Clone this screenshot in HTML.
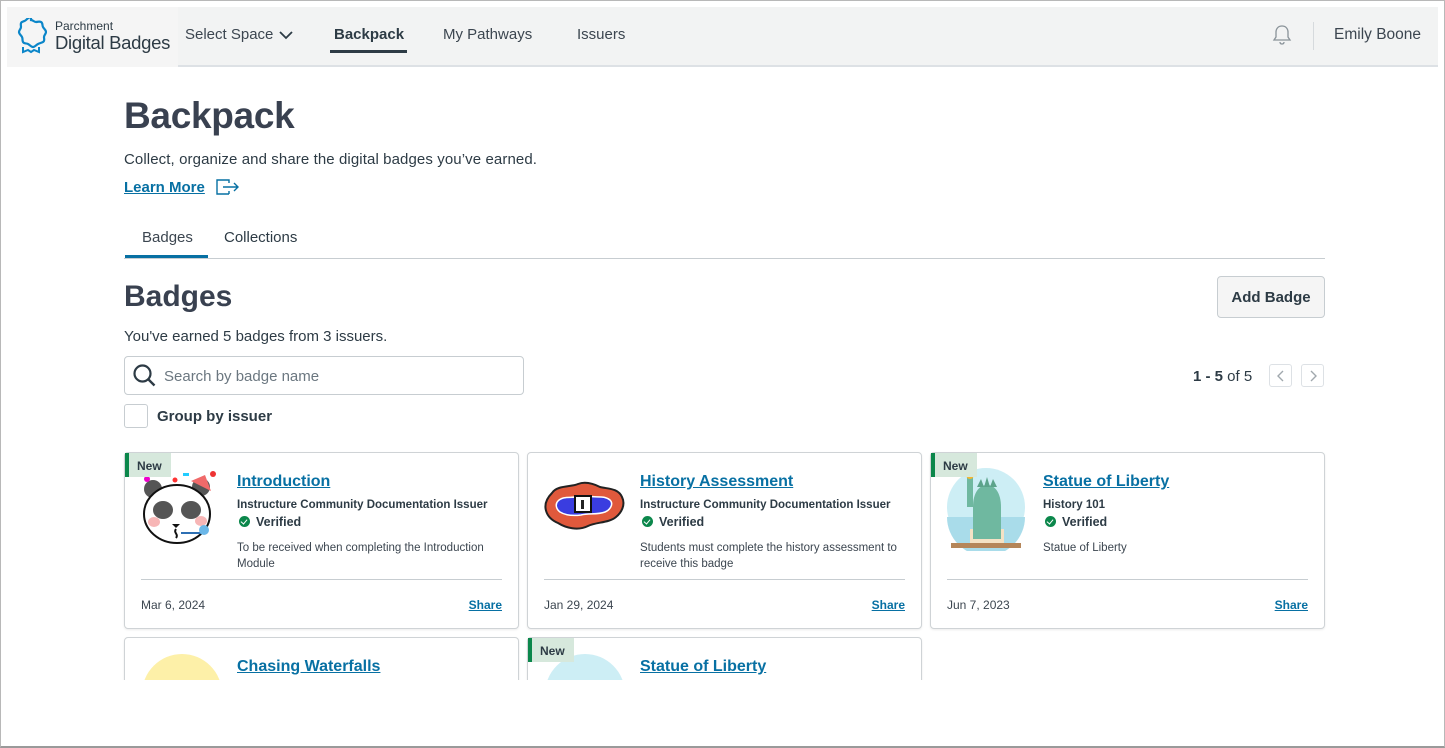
<!DOCTYPE html>
<html><head><meta charset="utf-8"><style>
*{box-sizing:border-box;margin:0;padding:0}
html,body{width:1445px;height:748px;overflow:hidden}
body{position:relative;background:#fff;font-family:"Liberation Sans",sans-serif;color:#2d3b45}
.frame{position:absolute;left:0;top:0;width:1445px;height:748px;border:1px solid #b8b8b8;border-bottom:2px solid #9a9a9a}
.app{position:absolute;left:7px;top:7px;width:1431px;height:673px;overflow:hidden;background:#fff}
.a{position:absolute;white-space:nowrap}
.hdr{position:absolute;left:0;top:0;width:1431px;height:60px;background:#f2f3f3;border-bottom:2px solid #dde1e5}
.lnk{color:#0770a3;text-decoration:underline}
.card{position:absolute;width:395px;height:177px;border:1px solid #cfd3d6;border-radius:4px;background:#fff;box-shadow:0 1px 2px rgba(0,0,0,.08)}
.new{position:absolute;left:0;top:0;width:46px;height:24px;background:#d6e8dc;border-left:4px solid #0b874b;font-size:12px;font-weight:bold;color:#2d3b45;padding:6px 0 0 8px}
.ct{position:absolute;left:112px;top:20px;font-size:16px;font-weight:bold;color:#0770a3;text-decoration:underline}
.is{position:absolute;left:112px;top:46px;font-size:11.5px;font-weight:bold}
.vf{position:absolute;left:114px;top:62px;font-size:12.5px;font-weight:bold}
.vf i{display:inline-block;width:11px;height:11px;border-radius:50%;background:#0b874b;margin-right:6px;vertical-align:-1px;position:relative}
.vf i:after{content:"";position:absolute;left:3px;top:2px;width:3px;height:5px;border:solid #fff;border-width:0 1.5px 1.5px 0;transform:rotate(40deg)}
.ds{position:absolute;left:112px;top:87px;font-size:11.5px;line-height:16px;color:#3c4650;white-space:normal;width:275px}
.dv{position:absolute;left:16px;right:16px;top:126px;border-top:1px solid #c7cdd1}
.dt{position:absolute;left:16px;top:145px;font-size:12px;color:#3c4650}
.sh{position:absolute;right:16px;top:145px;font-size:12px;font-weight:bold;color:#0770a3;text-decoration:underline}
</style></head><body>
<div class="frame"></div>
<div class="app">
 <div class="hdr">
  <div style="position:absolute;left:0;top:0;width:171px;height:60px;background:#f5f5f5"></div>
  <svg class="a" style="left:8px;top:11px" width="32" height="36" viewBox="0 0 32 36"><path d="M16 2c2 0 3 2 5 2s3-1 5 0 1 3 2 5 3 3 3 5-2 3-2 5 1 4-1 5-3 1-5 2-3 3-5 3-3-2-5-3-4 0-5-2 0-3-1-5-3-3-3-5 2-3 2-5-1-4 1-5 3-1 4-2 3-3 5-3z" fill="none" stroke="#0b86c9" stroke-width="2.2"/><path d="M8 29v5l5-2 3 2 3-2 5 2v-5" fill="none" stroke="#0b86c9" stroke-width="2"/></svg>
  <div class="a" style="left:48px;top:12px;font-size:12px;color:#2d3b45">Parchment</div>
  <div class="a" style="left:48px;top:25px;font-size:18.5px;color:#2d3b45;letter-spacing:-.3px">Digital Badges</div>
  <div class="a" style="left:178px;top:19px;font-size:15px;color:#3c4650">Select Space</div>
  <svg class="a" style="left:272px;top:23px" width="14" height="10" viewBox="0 0 14 10"><path d="M1 2l6 6 6-6" fill="none" stroke="#2d3b45" stroke-width="1.8"/></svg>
  <div class="a" style="left:327px;top:19px;font-size:15px;font-weight:bold">Backpack</div>
  <div class="a" style="left:323px;top:43px;width:77px;height:3px;background:#2d3b45"></div>
  <div class="a" style="left:436px;top:19px;font-size:15px;color:#3c4650">My Pathways</div>
  <div class="a" style="left:570px;top:19px;font-size:15px;color:#3c4650">Issuers</div>
  <svg class="a" style="left:1265px;top:17px" width="20" height="22" viewBox="0 0 20 22"><path d="M10 2c-4 0-6 3-6 6v5l-2 3h16l-2-3V8c0-3-2-6-6-6zM8 18c0 1.5 1 2 2 2s2-.5 2-2" fill="none" stroke="#8a9399" stroke-width="1.3"/></svg>
  <div class="a" style="left:1306px;top:15px;width:1px;height:28px;background:#d6dadd"></div>
  <div class="a" style="left:1327px;top:19px;font-size:15.5px;color:#3c4650">Emily Boone</div>
 </div>
 <div class="a" style="left:117px;top:88px;font-size:37px;font-weight:bold;color:#394150;letter-spacing:-.3px">Backpack</div>
 <div class="a" style="left:117px;top:144px;font-size:15px;color:#2d3b45;letter-spacing:.1px">Collect, organize and share the digital badges you’ve earned.</div>
 <div class="a lnk" style="left:117px;top:172px;font-size:15px;font-weight:bold">Learn More</div>
 <svg class="a" style="left:208px;top:171px" width="26" height="18" viewBox="0 0 26 18"><path d="M14 2H2v14h12M2 2h12v3M14 13v3M8 9h15M19 5l4 4-4 4" fill="none" stroke="#0770a3" stroke-width="1.4"/></svg>
 <div class="a" style="left:135px;top:222px;font-size:15px;color:#3c4650">Badges</div>
 <div class="a" style="left:217px;top:222px;font-size:15px;color:#2d3b45">Collections</div>
 <div class="a" style="left:117px;top:251px;width:1201px;height:1px;background:#c7cdd1"></div>
 <div class="a" style="left:118px;top:248px;width:83px;height:3px;background:#0770a3"></div>
 <div class="a" style="left:117px;top:273px;font-size:30px;font-weight:bold;color:#394150">Badges</div>
 <div class="a" style="left:1210px;top:269px;width:108px;height:42px;background:#f5f5f5;border:1px solid #c7cdd1;border-radius:4px;font-size:15px;font-weight:bold;text-align:center;line-height:41px">Add Badge</div>
 <div class="a" style="left:117px;top:321px;font-size:15px">You've earned 5 badges from 3 issuers.</div>
 <div class="a" style="left:117px;top:349px;width:400px;height:39px;border:1px solid #c7cdd1;border-radius:4px"></div>
 <svg class="a" style="left:125px;top:356px" width="26" height="26" viewBox="0 0 26 26"><circle cx="10.5" cy="10.5" r="8" fill="none" stroke="#2d3b45" stroke-width="2.2"/><path d="M16.5 16.5l6 6" stroke="#2d3b45" stroke-width="2.4"/></svg>
 <div class="a" style="left:157px;top:361px;font-size:15px;color:#6b7780">Search by badge name</div>
 <div class="a" style="left:117px;top:397px;width:24px;height:24px;border:1px solid #c7cdd1;border-radius:3px"></div>
 <div class="a" style="left:150px;top:401px;font-size:15px;font-weight:bold">Group by issuer</div>
 <div class="a" style="left:1186px;top:361px;font-size:15px"><b>1 - 5</b> of 5</div>
 <div class="a" style="left:1262px;top:357px;width:23px;height:23px;border:1px solid #dde1e5;border-radius:3px"></div>
 <svg class="a" style="left:1268px;top:362px" width="12" height="14"><path d="M8 2L3 7l5 5" fill="none" stroke="#a0a8ad" stroke-width="1.4"/></svg>
 <div class="a" style="left:1294px;top:357px;width:23px;height:23px;border:1px solid #dde1e5;border-radius:3px"></div>
 <svg class="a" style="left:1300px;top:362px" width="12" height="14"><path d="M4 2l5 5-5 5" fill="none" stroke="#a0a8ad" stroke-width="1.4"/></svg>

 <div class="card" style="left:117px;top:445px">
  <svg class="a" style="left:14px;top:14px" width="82" height="82" viewBox="0 0 82 82"><circle cx="14" cy="22" r="9" fill="#555"/><circle cx="62" cy="20" r="9" fill="#555"/><ellipse cx="38" cy="47" rx="33" ry="29" fill="#fff" stroke="#111" stroke-width="2"/><ellipse cx="24" cy="43" rx="10" ry="9" fill="#555"/><ellipse cx="52" cy="43" rx="10" ry="9" fill="#555"/><ellipse cx="15" cy="55" rx="6" ry="5" fill="#f7b6b6"/><ellipse cx="62" cy="54" rx="6" ry="5" fill="#f7b6b6"/><path d="M33 57h8l-4 4z" fill="#111"/><path d="M37 62c-3 4 3 5 0 9" fill="none" stroke="#111" stroke-width="2"/><path d="M42 66h20" stroke="#2d6fb3" stroke-width="2"/><circle cx="65" cy="63" r="5" fill="#6bb7e8"/><path d="M52 14l14-6 6 16z" fill="#f06a6a"/><circle cx="74" cy="7" r="3" fill="#e33"/><circle cx="8" cy="12" r="3" fill="#e0c"/><circle cx="36" cy="13" r="2.5" fill="#f33"/><rect x="44" y="6" width="6" height="3" fill="#2cf"/></svg>
  <div class="new">New</div>
  <div class="ct">Introduction</div>
  <div class="is">Instructure Community Documentation Issuer</div>
  <div class="vf"><i></i>Verified</div>
  <div class="ds">To be received when completing the Introduction Module</div>
  <div class="dv"></div><div class="dt">Mar 6, 2024</div><div class="sh">Share</div>
 </div>
 <div class="card" style="left:520px;top:445px">
  <svg class="a" style="left:14px;top:26px" width="84" height="56" viewBox="0 0 84 56"><path d="M10 14c5-8 20-6 26-9 8-3 16 0 22 3 8 2 18 1 22 10 4 8-1 16-6 20-7 6-20 5-28 9-10 5-22 2-30-3C4 39-2 26 10 14z" fill="#e0593c" stroke="#222" stroke-width="2"/><path d="M16 22c6-6 14-2 22-5h8c8 2 16-1 22 4 4 4 0 10-5 12-8 3-16 1-24 3-8 1-16 0-21-3-4-3-5-8-2-11z" fill="#3a3de0" stroke="#fff" stroke-width="1.5"/><rect x="33" y="17" width="16" height="16" fill="#fff" stroke="#111" stroke-width="2"/><rect x="39" y="21" width="3" height="9" fill="#222"/></svg>
  <div class="ct">History Assessment</div>
  <div class="is">Instructure Community Documentation Issuer</div>
  <div class="vf"><i></i>Verified</div>
  <div class="ds">Students must complete the history assessment to receive this badge</div>
  <div class="dv"></div><div class="dt">Jan 29, 2024</div><div class="sh">Share</div>
 </div>
 <div class="card" style="left:923px;top:445px">
  <svg class="a" style="left:14px;top:14px" width="82" height="84" viewBox="0 0 82 84"><circle cx="41" cy="40" r="39" fill="#cdeef5"/><path d="M2 50h78a39 39 0 0 1-78 0z" fill="#a9dcea"/><path d="M25 62h34v16H25z" fill="#f4e2c5"/><path d="M22 10h6v30h-6z" fill="#6fb8a0"/><circle cx="25" cy="8" r="4" fill="#f5b630"/><path d="M28 40c0-14 6-22 14-22s14 8 14 22v32H28z" fill="#6fb8a0"/><path d="M32 20l4-8 3 8 3-10 3 10 3-8 4 8z" fill="#5ca38b"/><rect x="6" y="76" width="70" height="5" fill="#b5865a"/></svg>
  <div class="new">New</div>
  <div class="ct">Statue of Liberty</div>
  <div class="is">History 101</div>
  <div class="vf"><i></i>Verified</div>
  <div class="ds">Statue of Liberty</div>
  <div class="dv"></div><div class="dt">Jun 7, 2023</div><div class="sh">Share</div>
 </div>
 <div class="card" style="left:117px;top:630px">
  <div class="a" style="left:17px;top:16px;width:80px;height:80px;border-radius:50%;background:#fdf0a8"></div>
  <div class="ct">Chasing Waterfalls</div>
 </div>
 <div class="card" style="left:520px;top:630px">
  <div class="a" style="left:17px;top:16px;width:80px;height:80px;border-radius:50%;background:#cdeef5"></div>
  <div class="new">New</div>
  <div class="ct">Statue of Liberty</div>
 </div>
</div>
</body></html>
